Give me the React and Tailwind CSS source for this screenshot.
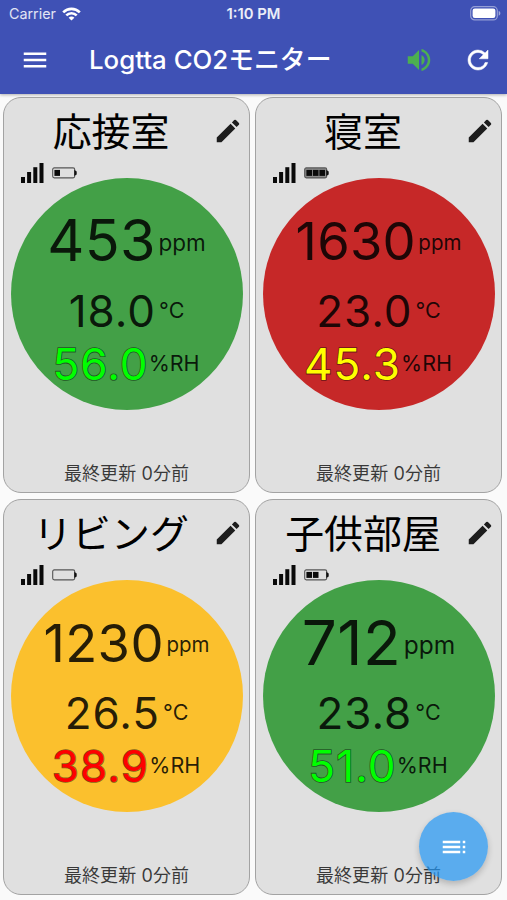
import React from "react";
import { MdMenu, MdVolumeUp, MdEdit, MdToc } from "react-icons/md";

const rooms = [
  {
    name: "応接室", battery: 1, circle: "bg-[#43a047]",
    co2: "453", co2Class: "text-[57.5px] tracking-[0.4px]", ppmClass: "text-[22.5px]",
    temp: "18.0", hum: "56.0", humClass: "text-[#00ff00]",
  },
  {
    name: "寝室", battery: 3, circle: "bg-[#c62828]",
    co2: "1630", co2Class: "text-[52.5px] tracking-[0.2px]", ppmClass: "text-[20.5px]",
    temp: "23.0", hum: "45.3", humClass: "text-[#ffff00]",
  },
  {
    name: "リビング", battery: 0, circle: "bg-[#fbc02d]",
    co2: "1230", co2Class: "text-[52.5px] tracking-[0.4px]", ppmClass: "text-[20.5px]",
    temp: "26.5", hum: "38.9", humClass: "text-[#ff0000]",
  },
  {
    name: "子供部屋", battery: 2, circle: "bg-[#43a047]",
    co2: "712", co2Class: "text-[62px] tracking-[0.4px]", ppmClass: "text-[24.5px]",
    temp: "23.8", hum: "51.0", humClass: "text-[#00ff00]",
  },
];

function Wifi() {
  return (
    <svg width="19" height="14" viewBox="0 0 19 14" fill="none" stroke="#fff" strokeWidth="2.6">
      <path d="M1.2 5.3C5.8.7 13.2.7 17.8 5.3" />
      <path d="M4.3 8.4C7.2 5.5 11.8 5.5 14.7 8.4" />
      <path d="M9.5 13.6L6.6 10.7C8.2 9.2 10.8 9.2 12.4 10.7Z" fill="#fff" stroke="none" />
    </svg>
  );
}

function Refresh() {
  return (
    <svg className="ml-[29px] size-[30px]" viewBox="0 0 24 24" fill="currentColor" stroke="currentColor" strokeWidth="0.4">
      <path d="M17.65 6.35A7.958 7.958 0 0 0 12 4c-4.42 0-7.99 3.58-7.99 8s3.57 8 7.99 8c3.73 0 6.84-2.55 7.73-6h-2.08A5.99 5.99 0 0 1 12 18c-3.31 0-6-2.69-6-6s2.69-6 6-6c1.66 0 3.14.69 4.22 1.78L13 11h7V4l-2.35 2.35z" />
    </svg>
  );
}

function PhoneBattery() {
  return (
    <svg width="31" height="15" viewBox="0 0 31 15">
      <rect x=".7" y=".7" width="26.6" height="13.2" rx="4" fill="none" stroke="#fff" strokeOpacity=".45" strokeWidth="1.2" />
      <rect x="2.6" y="2.6" width="22.8" height="9.4" rx="2.2" fill="#fff" />
      <path d="M28.7 5c2.2.7 2.2 4 0 4.7z" fill="#fff" fillOpacity=".5" />
    </svg>
  );
}

function Signal() {
  return (
    <svg width="23" height="20" viewBox="0 0 23 20" fill="#0a0a0a">
      <rect x="0" y="14" width="4" height="6" />
      <rect x="6.1" y="9" width="4" height="11" />
      <rect x="12.3" y="4.2" width="4" height="15.8" />
      <rect x="18.5" y="0" width="4" height="20" />
    </svg>
  );
}

function SensorBattery({ level }) {
  return (
    <svg width="25" height="12" viewBox="0 0 25 12">
      <rect x=".7" y=".9" width="22" height="10" rx="1.6" fill={level === 3 ? "#8a8a8a" : "none"} stroke="#555" strokeWidth="1.1" />
      <path d="M22.3 2.8l2.4 1.6v3l-2.4 1.6z" fill="#111" />
      {[0, 1, 2].slice(0, level).map((i) => (
        <rect key={i} x={2.4 + i * 6.5} y="2.9" width="5.6" height="6" fill="#0a0a0a" />
      ))}
    </svg>
  );
}

function Card({ room }) {
  return (
    <section className="flex h-[396px] w-[247px] flex-col items-center rounded-[18px] border border-[#a3a3a3] bg-[#e0e0e0]">
      <div className="flex h-[66px] w-full items-center pt-px">
        <h2 className="w-[214px] whitespace-nowrap pb-[3px] text-center font-['Noto_Sans_CJK_JP',sans-serif] text-[38.9px] leading-none text-black">
          {room.name}
        </h2>
        <MdEdit className="-ml-[5px] size-[30px] shrink-0 text-[#1d1d1d]" />
      </div>
      <div className="-mt-[0.5px] flex h-[20px] w-full items-center gap-[8px] pl-[17px]">
        <Signal />
        <SensorBattery level={room.battery} />
      </div>
      <div className={`-mt-[5px] flex size-[232px] shrink-0 flex-col rounded-full pt-[24px] text-black/85 ${room.circle}`}>
        <div className="flex h-[78px] items-center justify-center gap-[2.5px] leading-none">
          <span className={room.co2Class}>{room.co2}</span>
          <span className={`pt-[5px] ${room.ppmClass}`}>ppm</span>
        </div>
        <div className="flex h-[61px] items-center justify-center gap-[3px] leading-none">
          <span className="text-[44px] tracking-[1px]">{room.temp}</span>
          <span className="pt-[1px] text-[21.5px]">°C</span>
        </div>
        <div className="flex h-[45px] items-center justify-center pr-[1px] leading-none">
          <span className={`text-[44px] tracking-[1.1px] [-webkit-text-stroke:1.6px_rgba(0,0,0,0.5)] [paint-order:stroke_fill] ${room.humClass}`}>{room.hum}</span>
          <span className="pt-[1px] text-[21.5px]">%RH</span>
        </div>
      </div>
      <p className="mt-[52.5px] whitespace-nowrap text-[18px] leading-[22px] tracking-[0.1px] text-black/75">最終更新 0分前</p>
    </section>
  );
}

export default function App() {
  return (
    <div className="relative flex h-[900px] w-[507px] flex-col overflow-hidden bg-[#fafafa] font-[Inter,'Noto_Sans_CJK_JP',sans-serif]">
      <header className="h-[94px] shrink-0 bg-[#3f51b5] text-white shadow-[0_1px_3px_rgba(0,0,0,0.3)]">
        <div className="grid h-[27px] grid-cols-3 items-center">
          <div className="flex items-center gap-[6px] pl-[9px] text-[14.3px] text-white/85">
            <span>Carrier</span>
            <Wifi />
          </div>
          <span className="pt-px text-center text-[14.8px] font-semibold text-white/90">1:10 PM</span>
          <div className="flex justify-end pr-[6px]"><PhoneBattery /></div>
        </div>
        <div className="flex h-[67px] items-center pl-5 pr-[14px] pb-[1px]">
          <MdMenu className="size-[30px]" />
          <h1 className="ml-[39px] flex-1 whitespace-nowrap text-[25.8px] font-medium leading-none">Logtta CO2モニター</h1>
          <MdVolumeUp className="size-[30px] text-[#4caf50]" />
          <Refresh />
        </div>
      </header>
      <main className="grid grid-cols-[247px_247px] gap-x-[5px] gap-y-[6px] pl-[3px] pt-[2.5px]">
        {rooms.map((room) => <Card key={room.name} room={room} />)}
      </main>
      <button className="absolute bottom-[19px] right-[19px] flex size-[69px] items-center justify-center rounded-full bg-[#2196f3]/70 text-white shadow-[0_3px_6px_rgba(0,0,0,0.2)]">
        <MdToc className="size-[30px]" />
      </button>
    </div>
  );
}
